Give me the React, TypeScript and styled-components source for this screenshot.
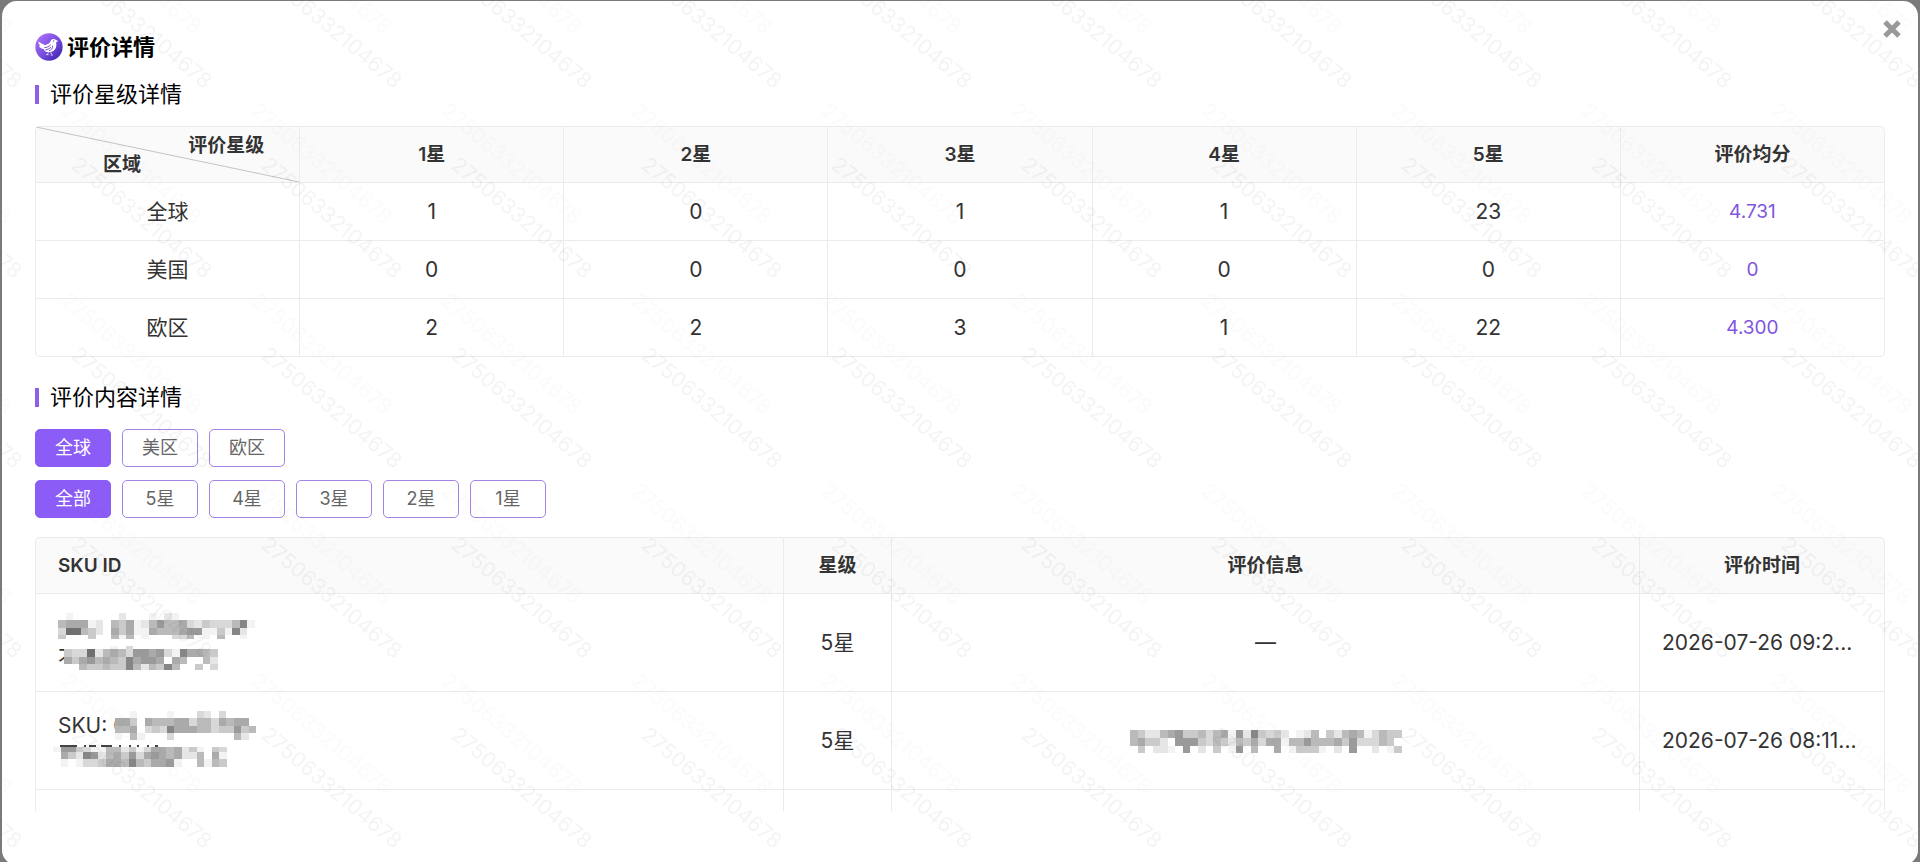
import React, { useState } from "react";
import styled, { createGlobalStyle } from "styled-components";

const GlobalStyle = createGlobalStyle`
  *, *::before, *::after { box-sizing: border-box; }
  body {
    margin: 0;
    background: #7a7a7a;
    color: #333;
    font-family: Inter, "Noto Sans CJK SC", sans-serif;
  }
`;

const Backdrop = styled.div`
  height: 100vh;
  padding: 1px 2px 0;
  overflow: hidden;
  background: #7a7a7a;
`;

const Modal = styled.section`
  position: relative;
  display: flex;
  flex-direction: column;
  height: calc(100vh + 2px);
  padding: 32px 33px 54px;
  overflow: hidden;
  border-radius: 15px;
  background: #fff;
`;

const Watermark = styled.svg`
  position: absolute;
  inset: 0;
  width: 100%;
  height: 100%;
  pointer-events: none;
  font-size: 21px;
`;

const CloseButton = styled.button`
  position: absolute;
  top: 15px;
  right: 13px;
  display: flex;
  padding: 4px;
  border: 0;
  background: none;
  cursor: pointer;
`;

const Header = styled.header`
  display: flex;
  align-items: center;
  gap: 4px;
  height: 28px;
  margin-bottom: 18px;
`;

const Title = styled.h1`
  margin: 0;
  color: #000;
  font-size: 22px;
  font-weight: 600;
  line-height: 28px;
`;

const SectionTitle = styled.h2`
  display: flex;
  align-items: center;
  gap: 11px;
  margin: 0 0 17px;
  color: #000;
  font-size: 22px;
  font-weight: 400;
  line-height: 30px;

  &::before {
    content: "";
    width: 4px;
    height: 19px;
    background: #8b5fe8;
  }
`;

const SummarySection = styled.section`
  margin-bottom: 25px;
`;

const DetailSection = styled.section`
  display: flex;
  flex: 1;
  flex-direction: column;
  min-height: 0;
`;

const ButtonRow = styled.div<{ $last?: boolean }>`
  display: flex;
  gap: 11px;
  margin-bottom: ${(p) => (p.$last ? 19 : 13)}px;
`;

const FilterButton = styled.button<{ $active: boolean }>`
  width: 76px;
  height: 38px;
  padding: 0;
  border: 1px solid ${(p) => (p.$active ? "#8b5cf6" : "#a583e6")};
  border-radius: 5px;
  background: ${(p) => (p.$active ? "#8b5cf6" : "#fff")};
  color: ${(p) => (p.$active ? "#fff" : "#666")};
  font-family: inherit;
  font-size: 18px;
  line-height: 26px;
  cursor: pointer;
`;

const TableScroll = styled.div`
  flex: 1;
  min-height: 0;
  overflow: hidden;
`;

const Table = styled.table`
  width: 100%;
  table-layout: fixed;
  border-collapse: separate;
  border-spacing: 0;
  border: solid #ebebeb;
  border-width: 1px 0 0 1px;
  border-radius: 5px;
`;

const HeadCell = styled.th<{ $left?: boolean }>`
  height: 56px;
  padding: 0 ${(p) => (p.$left ? 22 : 0)}px;
  border: solid #ebebeb;
  border-width: 0 1px 1px 0;
  background: #fafafa;
  font-size: 19px;
  font-weight: 600;
  line-height: 28px;
  text-align: ${(p) => (p.$left ? "left" : "center")};

  &:first-child { border-top-left-radius: 5px; }
  &:last-child { border-top-right-radius: 5px; }
`;

const CornerCell = styled(HeadCell)`
  position: relative;
  line-height: 19px;
`;

const CornerLine = styled.svg`
  position: absolute;
  inset: 0;
  width: 100%;
  height: 100%;
`;

const ColumnAxis = styled.div`
  position: relative;
  padding-right: 35px;
  text-align: right;
`;

const RowAxis = styled.div`
  position: relative;
  padding-left: 67px;
  text-align: left;
`;

const Cell = styled.td<{ $tall?: boolean; $left?: boolean }>`
  height: ${(p) => (p.$tall ? 98 : 58)}px;
  padding: 0 ${(p) => (p.$left ? 22 : 0)}px;
  border: solid #ebebeb;
  border-width: 0 1px 1px 0;
  font-size: 21px;
  line-height: 30px;
  text-align: ${(p) => (p.$left ? "left" : "center")};
  white-space: nowrap;
`;

const SummaryBody = styled.tbody`
  tr:last-child td:last-child { border-bottom-right-radius: 5px; }
  tr:last-child th:first-child { border-bottom-left-radius: 5px; }
`;

const RowHead = styled(Cell).attrs({ as: "th", scope: "row" })`
  font-weight: 400;
`;

const ScoreCell = styled(Cell)`
  color: #8055e0;
  font-size: 19px;
`;

const StarCol = styled.col`
  width: 108px;
`;

const TimeCol = styled.col`
  width: 245px;
`;

const SkuLine = styled.div`
  display: flex;
  align-items: center;
  height: 30px;
`;

const MosaicSvg = styled.svg<{ $overlap: number }>`
  display: inline-block;
  flex: none;
  margin-left: -${(p) => p.$overlap}px;
  background: #fff;
  vertical-align: middle;
`;

const SHADES = ["#fff", "#f3f3f3", "#e6e6e6", "#d8d8d8", "#cacaca", "#bababa", "#aaaaaa", "#9a9a9a", "#868686", "#707070"];

type MosaicProps = {
  width: number;
  rows: [height: number, shades: string][];
  overlap?: number;
  children?: React.ReactNode;
};

function Mosaic({ width, rows, overlap = 0, children }: MosaicProps) {
  const total = rows.reduce((sum, [h]) => sum + h, 0);
  const cell = width / rows[0][1].length;
  let top = 0;
  return (
    <MosaicSvg width={width} height={total} $overlap={overlap} shapeRendering="crispEdges" aria-hidden="true">
      {rows.map(([h, shades], r) => {
        const y = top;
        top += h;
        return shades.split("").map((s, c) =>
          s === "0" ? null : (
            <rect key={`${r}-${c}`} x={c * cell} y={y} width={cell} height={h} fill={SHADES[Number(s)]} />
          )
        );
      })}
      {children}
    </MosaicSvg>
  );
}

function Logo() {
  return (
    <svg width="28" height="28" viewBox="0 0 84 84" aria-hidden="true">
      <defs>
        <linearGradient id="logo-fill" x1="0.1" y1="0.1" x2="0.9" y2="0.9">
          <stop offset="0" stopColor="#ab6cf8" />
          <stop offset="0.5" stopColor="#7a4fe0" />
          <stop offset="1" stopColor="#4128b4" />
        </linearGradient>
      </defs>
      <circle cx="42" cy="42" r="41" fill="url(#logo-fill)" />
      <path
        d="M70 24 L63 21 C59 16 50 17 47 23 C45 28 44 31 38 33 L30 37 C24 33 16 31 10 25 C10 31 12 36 16 39 C14 39 13 39 11 38 C14 44 20 47 26 48 C27 54 33 58 42 58 C56 57 64 48 64 36 C64 32 63 29 64 27 Z"
        fill="#fff"
      />
      <path d="M28 44 C36 44 42 40 47 35 M31 51 C38 50 43 46 48 43 M53 38 C54 46 48 52 42 53" fill="none" stroke="#7148d8" strokeWidth="3" />
      <path d="M40 58 L37 65 M47 57 L50 65 M33 65 H41 M47 66 H54" fill="none" stroke="#fff" strokeWidth="2" />
      <circle cx="56" cy="24" r="2" fill="#7148d8" />
    </svg>
  );
}

const MARK_TILES = [
  [0, 0],
  [-190, 0],
  [0, -190],
  [-190, -190],
];

function WatermarkLayer() {
  return (
    <Watermark aria-hidden="true">
      <defs>
        <pattern id="mark" width="190" height="190" patternUnits="userSpaceOnUse">
          {MARK_TILES.map(([x, y]) => (
            <g key={`${x},${y}`} fill="#000">
              <text transform={`translate(${x + 68} ${y + 166}) rotate(40)`} fillOpacity="0.045">
                27506332104678
              </text>
              <text transform={`translate(${x + 58} ${y + 112}) rotate(40)`} fillOpacity="0.014">
                27506332104678
              </text>
            </g>
          ))}
        </pattern>
      </defs>
      <rect width="100%" height="100%" fill="url(#mark)" />
    </Watermark>
  );
}

const summary = [
  { region: "全球", counts: [1, 0, 1, 1, 23], score: "4.731" },
  { region: "美国", counts: [0, 0, 0, 0, 0], score: "0" },
  { region: "欧区", counts: [2, 2, 3, 1, 22], score: "4.300" },
];

const regions = ["全球", "美区", "欧区"];
const stars = ["全部", "5星", "4星", "3星", "2星", "1星"];

export default function App() {
  const [region, setRegion] = useState("全球");
  const [star, setStar] = useState("全部");

  return (
    <Backdrop>
      <GlobalStyle />
      <Modal role="dialog" aria-labelledby="dialog-title">
        <Header>
          <Logo />
          <Title id="dialog-title">评价详情</Title>
        </Header>

        <SummarySection>
          <SectionTitle>评价星级详情</SectionTitle>
          <Table>
            <thead>
              <tr>
                <CornerCell>
                  <CornerLine aria-hidden="true">
                    <line x1="0" y1="0" x2="100%" y2="100%" stroke="#c4c4c4" />
                  </CornerLine>
                  <ColumnAxis>评价星级</ColumnAxis>
                  <RowAxis>区域</RowAxis>
                </CornerCell>
                {["1星", "2星", "3星", "4星", "5星", "评价均分"].map((label) => (
                  <HeadCell key={label} scope="col">{label}</HeadCell>
                ))}
              </tr>
            </thead>
            <SummaryBody>
              {summary.map((row) => (
                <tr key={row.region}>
                  <RowHead>{row.region}</RowHead>
                  {row.counts.map((count, i) => (
                    <Cell key={i}>{count}</Cell>
                  ))}
                  <ScoreCell>{row.score}</ScoreCell>
                </tr>
              ))}
            </SummaryBody>
          </Table>
        </SummarySection>

        <DetailSection>
          <SectionTitle>评价内容详情</SectionTitle>
          <ButtonRow>
            {regions.map((r) => (
              <FilterButton key={r} type="button" $active={r === region} aria-pressed={r === region} onClick={() => setRegion(r)}>
                {r}
              </FilterButton>
            ))}
          </ButtonRow>
          <ButtonRow $last>
            {stars.map((s) => (
              <FilterButton key={s} type="button" $active={s === star} aria-pressed={s === star} onClick={() => setStar(s)}>
                {s}
              </FilterButton>
            ))}
          </ButtonRow>
          <TableScroll>
            <Table>
              <colgroup>
                <col />
                <StarCol />
                <col />
                <TimeCol />
              </colgroup>
              <thead>
                <tr>
                  <HeadCell scope="col" $left>SKU ID</HeadCell>
                  <HeadCell scope="col">星级</HeadCell>
                  <HeadCell scope="col">评价信息</HeadCell>
                  <HeadCell scope="col">评价时间</HeadCell>
                </tr>
              </thead>
              <tbody>
                <tr>
                  <Cell $tall $left>
                    <SkuLine>
                      <Mosaic
                        width={197}
                        rows={[
                          [7, "01000000200010210000000000"],
                          [8, "56661205461257556324333581"],
                          [7, "39954206461165556771141820"],
                          [4, "40004005150100033501050010"],
                          [4, "00000000000000000000000000"],
                        ]}
                      />
                    </SkuLine>
                    <SkuLine>
                      <span>不</span>
                      <Mosaic
                        width={154}
                        overlap={15}
                        rows={[
                          [3, "00000010300000000000"],
                          [8, "43392565377673186654"],
                          [7, "64675654867760650052"],
                          [6, "00544544852548500403"],
                        ]}
                      />
                    </SkuLine>
                  </Cell>
                  <Cell $tall>5星</Cell>
                  <Cell $tall>—</Cell>
                  <Cell $tall $left>2026-07-26 09:2...</Cell>
                </tr>
                <tr>
                  <Cell $tall $left>
                    <SkuLine>
                      <span>SKU: 0</span>
                      <Mosaic
                        width={141}
                        overlap={11}
                        rows={[
                          [7, "0010000100032030000"],
                          [8, "6640655566355365660"],
                          [7, "5560343866655344745"],
                          [7, "1051000300000000520"],
                        ]}
                      />
                    </SkuLine>
                    <SkuLine>
                      <Mosaic
                        width={174}
                        overlap={5}
                        rows={[
                          [2, "00000000000000000000000"],
                          [5, "17743115524136656241043"],
                          [7, "06428725647367656225061"],
                          [8, "01013346658546671005154"],
                        ]}
                      >
                        <path d="M7 1H24 M31 1H33 M36 1H43 M48 1H59 M66 1H68 M76 1H78 M84 1H86 M94 1H96 M102 1H105" stroke="#444" strokeWidth="2" />
                      </Mosaic>
                    </SkuLine>
                  </Cell>
                  <Cell $tall>5星</Cell>
                  <Cell $tall>
                    <Mosaic
                      width={272}
                      rows={[
                        [8, "542256744535617284342012504256513544"],
                        [8, "564420777435425463661557555647333540"],
                        [7, "040221070204017050060144410207002014"],
                      ]}
                    />
                  </Cell>
                  <Cell $tall $left>2026-07-26 08:11...</Cell>
                </tr>
                <tr>
                  <Cell $tall />
                  <Cell $tall />
                  <Cell $tall />
                  <Cell $tall />
                </tr>
              </tbody>
            </Table>
          </TableScroll>
        </DetailSection>

        <WatermarkLayer />
        <CloseButton type="button" aria-label="关闭">
          <svg width="18" height="18" viewBox="0 0 18 18" aria-hidden="true">
            <path d="M2 2 L16 16 M16 2 L2 16" stroke="#999" strokeWidth="5" />
          </svg>
        </CloseButton>
      </Modal>
    </Backdrop>
  );
}
